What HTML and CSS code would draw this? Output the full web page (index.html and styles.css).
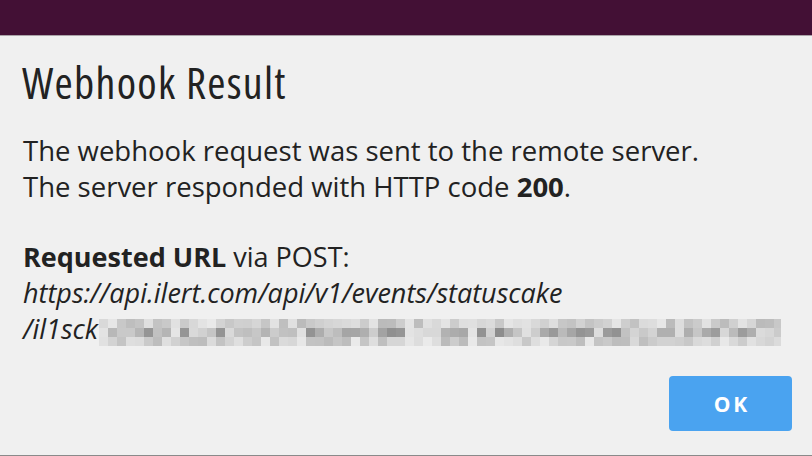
FILE: index.html
```html
<!DOCTYPE html>
<html lang="en">
<head>
<meta charset="utf-8">
<title>Webhook Result</title>
<link rel="stylesheet" href="styles.css">
</head>
<body>
<div class="topbar"></div>
<div class="dialog">
  <h1 class="title">Webhook Result</h1>
  <p class="message">The webhook request was sent to the remote server.<br>The server responded with HTTP code <b>200</b>.</p>
  <div class="request">
    <div class="req-line"><b>Requested URL</b> via POST:</div>
    <div class="req-url">https://api.ilert.com/api/v1/events/statuscake</div>
    <div class="req-url">/il1sck<span class="redacted" aria-label="redacted"><svg width="682" height="27" viewBox="0 0 682 27" id="blur"></svg></span></div>
  </div>
  <div class="actions">
    <button class="ok-btn">OK</button>
  </div>
</div>
<script>
(function(){
  var svg=document.getElementById('blur');
  var ns='http://www.w3.org/2000/svg';
  var seed=11;
  function rnd(){seed=(seed*9301+49297)%233280;return seed/233280;}
  for(var r=0;r<3;r++){
    for(var c=0;c<76;c++){
      var g;
      if(r==1){ g=Math.round(140+rnd()*90); }
      else { g=Math.round(185+rnd()*50); }
      var rect=document.createElementNS(ns,'rect');
      rect.setAttribute('x',c*9);rect.setAttribute('y',r*9);
      rect.setAttribute('width',9);rect.setAttribute('height',9);
      rect.setAttribute('fill','rgb('+g+','+g+','+g+')');
      svg.appendChild(rect);
    }
  }
})();
</script>
</body>
</html>
```
FILE: styles.css
```css
html, body {
  margin: 0;
  padding: 0;
  height: 100%;
  background: #f0f0f0;
}
body {
  display: flex;
  flex-direction: column;
  font-family: "Open Sans", "DejaVu Sans", sans-serif;
  color: #222;
}
.topbar {
  height: 35px;
  background: #431035;
  border-bottom: 1px solid #aaa3a8;
  flex: none;
}
.dialog {
  flex: 1;
  display: flex;
  flex-direction: column;
  padding: 0 20px 0 23px;
  border-bottom: 1px solid #8a8a8a;
}
.title {
  margin: 20px 0 0 -1px;
  font-size: 44px;
  line-height: 52px;
  font-weight: 500;
  font-stretch: 75%;
  letter-spacing: 1.3px;
  color: #222;
}
.message {
  margin: 25px 0 0;
  font-size: 27.5px;
  line-height: 36px;
}
.message b { font-weight: 700; }
.request {
  margin-top: 34px;
  font-size: 27px;
  line-height: 36px;
}
.req-line b { font-weight: 700; }
.req-url { font-style: italic; display: flex; align-items: center; }
.redacted { display: inline-flex; margin-left: 1px; margin-top: 6px; }
.redacted svg { display: block; }
.actions {
  margin-top: auto;
  margin-bottom: 24px;
  display: flex;
  justify-content: flex-end;
}
.ok-btn {
  width: 123px;
  height: 55px;
  background: #4aa3f0;
  border: none;
  border-radius: 4px;
  color: #fff;
  font-family: "Open Sans", sans-serif;
  font-weight: 700;
  font-size: 21px;
  letter-spacing: 3px;
  padding: 0 0 0 3px;
}
```
